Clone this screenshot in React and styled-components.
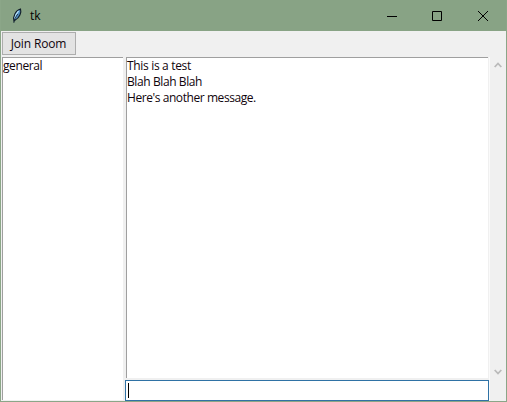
import React from "react";
import styled, { createGlobalStyle } from "styled-components";

const GlobalStyle = createGlobalStyle`
  * { box-sizing: border-box; }
  body { margin: 0; overflow: hidden; }
`;

const Window = styled.div`
  width: 507px;
  height: 402px;
  display: flex;
  flex-direction: column;
  background: #f0f0f0;
  border: solid #8ba688;
  border-width: 0 1px 1px;
  font: 12px/16px "Open Sans", "Noto Sans", sans-serif;
  color: #10040c;
`;

const TitleBar = styled.header`
  height: 31px;
  flex: none;
  display: flex;
  align-items: center;
  background: #88a385;
  padding-left: 8px;
`;

const Title = styled.span`
  flex: 1;
  margin-left: 5px;
  color: #000;
`;

const WindowButton = styled.button`
  width: ${(p) => p.$width || 46}px;
  height: 31px;
  padding: 0;
  border: 0;
  background: none;
  display: flex;
  align-items: center;
  justify-content: center;
`;

const Toolbar = styled.div`
  height: 26px;
  flex: none;
  padding: 1px;
`;

const PushButton = styled.button`
  width: 74px;
  height: 23px;
  padding: 0 1px 0 0;
  display: block;
  border: 1px solid #adadad;
  background: #e3e3e3;
  font: inherit;
  line-height: 21px;
  color: inherit;
  letter-spacing: ${(p) => p.$tracking || 0}px;
`;

const Content = styled.main`
  height: 344px;
  display: grid;
  grid-template-columns: 124px 364px 1fr;
`;

const ListBox = styled.div`
  margin: 0 2px 1px 1px;
  border-top: 1px solid #9f9f9f;
  border-left: 1px solid #9f9f9f;
  background: #fff;
`;

const ChatColumn = styled.section`
  display: flex;
  flex-direction: column;
  min-width: 0;
`;

const Messages = styled.div`
  flex: 1;
  margin: 0 1px 2px;
  border-top: 1px solid #9f9f9f;
  border-left: 1px solid #9f9f9f;
  background: #fff;
`;

const Line = styled.div`
  height: 16px;
  white-space: nowrap;
  letter-spacing: ${(p) => p.$tracking || 0}px;
`;

const Entry = styled.div`
  height: 21px;
  border: 1px solid #2f72a5;
  background: #fff;
  padding: 2px;
`;

const Caret = styled.div`
  width: 1px;
  height: 15px;
  background: #000;
`;

const ScrollBar = styled.div`
  display: flex;
  flex-direction: column;
  justify-content: space-between;
  border-left: 1px solid #fafafa;
  padding: 5px 3px 26px 4px;
`;

const Arrow = ({ d }) => (
  <svg width="8" height="6" viewBox="0 0 8 6">
    <path d={d} fill="none" stroke="#bababa" strokeWidth="1.8" />
  </svg>
);

const Feather = () => (
  <svg width="16" height="16" viewBox="0 0 16 16">
    <path d="M5 13C3.6 9 6.5 2.3 11.5 1C12.7 4.5 10.5 9.7 6.2 12Z" fill="#4d8cc0" stroke="#101c27" strokeWidth="1.1" />
    <path d="M5.8 10.5C6.2 7.5 7.6 5 9.6 3" fill="none" stroke="#b9e3fb" strokeWidth="1.2" />
    <path d="M4.8 15C5.2 11.5 6.8 8.4 8.8 6" fill="none" stroke="#152433" strokeWidth="0.8" />
  </svg>
);

const messages = [
  { text: "This is a test", tracking: -0.33 },
  { text: "Blah Blah Blah", tracking: -0.4 },
  { text: "Here's another message.", tracking: -0.43 },
];

export default function App() {
  return (
    <>
      <GlobalStyle />
      <Window>
        <TitleBar>
          <Feather />
          <Title>tk</Title>
          <WindowButton $width={44} aria-label="Minimize">
            <svg width="10" height="10"><path d="M0 5.5H10" stroke="#000" /></svg>
          </WindowButton>
          <WindowButton aria-label="Maximize">
            <svg width="10" height="10"><path d="M.5 .5H9.5V9.5H.5Z" fill="none" stroke="#000" /></svg>
          </WindowButton>
          <WindowButton aria-label="Close">
            <svg width="10" height="10"><path d="M0 0L10 10M10 0L0 10" stroke="#000" /></svg>
          </WindowButton>
        </TitleBar>
        <Toolbar>
          <PushButton $tracking={-0.15}>Join Room</PushButton>
        </Toolbar>
        <Content>
          <ListBox>
            <Line $tracking={-0.4}>general</Line>
          </ListBox>
          <ChatColumn>
            <Messages>
              {messages.map((m) => (
                <Line key={m.text} $tracking={m.tracking}>{m.text}</Line>
              ))}
            </Messages>
            <Entry><Caret /></Entry>
          </ChatColumn>
          <ScrollBar>
            <Arrow d="M.7 5L4 1.5L7.3 5" />
            <Arrow d="M.7 1L4 4.5L7.3 1" />
          </ScrollBar>
        </Content>
      </Window>
    </>
  );
}
